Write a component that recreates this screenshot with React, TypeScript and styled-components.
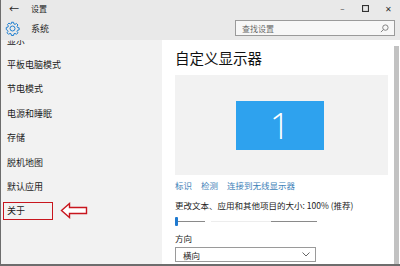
import styled, { createGlobalStyle } from 'styled-components';

const GlobalStyle = createGlobalStyle`
  html, body { margin: 0; padding: 0; background: #fff; }
  body { font-family: "Noto Sans CJK SC", "Noto Sans", sans-serif; }
`;

const Window = styled.div`
  width: 400px;
  height: 266px;
  box-sizing: border-box;
  border-left: 1px solid #6d6d6d;
  border-bottom: 2px solid #6d6d6d;
  background: #e9e9e9;
  display: flex;
  flex-direction: column;
  overflow: hidden;
  color: #1e1e1e;
`;

const TitleBar = styled.div`
  height: 16px;
  display: flex;
  align-items: center;
  padding: 0 0 0 8px;
  font-size: 8px;
`;

const Back = styled.span`
  font-size: 10px;
  width: 22px;
`;

const TitleText = styled.span`
  flex: 1;
`;

const WinButton = styled.span`
  width: 23px;
  display: flex;
  justify-content: center;
  align-items: center;
  color: #333;
`;

const Header = styled.div`
  height: 24px;
  display: flex;
  align-items: center;
  padding: 0 5px 0 4px;
`;

const HeaderTitle = styled.span`
  font-size: 9px;
  margin-left: 11px;
  flex: 1;
`;

const Search = styled.div`
  width: 147px;
  height: 14px;
  border: 1px solid #9a9a9a;
  background: #f7f7f7;
  display: flex;
  align-items: center;
  justify-content: space-between;
  padding: 0 5px 0 6px;
  font-size: 8px;
  color: #6a6a6a;
`;

const Body = styled.div`
  flex: 1;
  display: flex;
  min-height: 0;
`;

const Sidebar = styled.div`
  width: 161px;
  background: #f2f2f2;
  overflow: hidden;
  position: relative;
`;

const NavList = styled.div`
  margin-top: -12px;
  display: flex;
  flex-direction: column;
`;

const NavItem = styled.div<{ $marked?: boolean }>`
  height: 24.4px;
  display: flex;
  align-items: center;
  padding-left: 6px;
  font-size: 9px;
  color: #1a1a1a;
  position: relative;
  ${(p) =>
    p.$marked &&
    `
    &::after {
      content: '';
      position: absolute;
      left: 2px;
      top: 3px;
      width: 48px;
      height: 16px;
      border: 1.5px solid #c8161e;
    }
  `}
`;

const Arrow = styled.svg`
  position: absolute;
  left: 59px;
  top: 162px;
`;

const Content = styled.div`
  flex: 1;
  background: #fff;
  padding: 8px 0 0 13px;
  display: flex;
  flex-direction: column;
  overflow: hidden;
`;

const Heading = styled.div`
  font-size: 14.5px;
  line-height: 20px;
  color: #111;
`;

const Preview = styled.div`
  margin-top: 7px;
  width: 213px;
  height: 100px;
  background: #f2f2f2;
  display: flex;
  align-items: center;
  justify-content: center;
`;

const Monitor = styled.div`
  width: 88px;
  height: 49px;
  background: #2ea2ee;
  color: #fff;
  font-family: "Open Sans", "Liberation Sans", sans-serif;
  font-weight: 300;
  font-size: 36px;
  display: flex;
  align-items: center;
  justify-content: center;
  margin-left: -3px;
`;

const Links = styled.div`
  display: flex;
  gap: 9px;
  margin-top: 4px;
  font-size: 8.5px;
  color: #3d7fb8;
`;

const Label = styled.div<{ $top: number }>`
  font-size: 8.5px;
  margin-top: ${(p) => p.$top}px;
  color: #222;
`;

const Slider = styled.div`
  margin-top: 5px;
  display: flex;
  align-items: center;
  height: 10px;
`;

const Thumb = styled.div`
  width: 3px;
  height: 9px;
  border-radius: 1px;
  background: #1f7ad0;
`;

const Track = styled.div<{ $w: number; $faded?: boolean }>`
  width: ${(p) => p.$w}px;
  height: 1px;
  background: ${(p) => (p.$faded ? '#ededed' : '#8a8a8a')};
  margin-left: ${(p) => (p.$faded ? 6 : 0)}px;
`;

const Select = styled.div`
  margin-top: 3px;
  width: 141px;
  height: 15px;
  box-sizing: border-box;
  border: 1px solid #9a9a9a;
  display: flex;
  align-items: center;
  justify-content: space-between;
  padding: 0 5px 0 7px;
  font-size: 8.5px;
`;

const Scrollbar = styled.div`
  width: 7px;
  background: #fff;
  display: flex;
  flex-direction: column;
  align-items: center;
`;

const ScrollThumb = styled.div`
  margin-top: 6px;
  width: 5px;
  flex: 1;
  background: #c2c2c2;
`;

const Gear = () => (
  <svg width="15" height="15" viewBox="0 0 24 24" fill="none" stroke="#1f7fd0" strokeWidth="1.6">
    <path d="M10.3 2h3.4l.5 2.6 1.9.8 2.2-1.5 2.4 2.4-1.5 2.2.8 1.9 2.6.5v3.4l-2.6.5-.8 1.9 1.5 2.2-2.4 2.4-2.2-1.5-1.9.8-.5 2.6h-3.4l-.5-2.6-1.9-.8-2.2 1.5-2.4-2.4 1.5-2.2-.8-1.9L2 13.7v-3.4l2.6-.5.8-1.9-1.5-2.2 2.4-2.4 2.2 1.5 1.9-.8z" />
    <circle cx="12" cy="12" r="4" />
  </svg>
);

const SearchIcon = () => (
  <svg width="9" height="9" viewBox="0 0 10 10" fill="none" stroke="#777" strokeWidth="1">
    <circle cx="6" cy="4" r="3" />
    <path d="M4 6L1 9" />
  </svg>
);

export default function App() {
  const nav = ['显示', '平板电脑模式', '节电模式', '电源和睡眠', '存储', '脱机地图', '默认应用', '关于'];
  return (
    <>
      <GlobalStyle />
      <Window>
        <TitleBar>
          <Back>←</Back>
          <TitleText>设置</TitleText>
          <WinButton>–</WinButton>
          <WinButton>
            <svg width="7" height="7"><rect x="0.5" y="0.5" width="6" height="6" fill="none" stroke="#333" strokeWidth="1.2" /></svg>
          </WinButton>
          <WinButton>✕</WinButton>
        </TitleBar>
        <Header>
          <Gear />
          <HeaderTitle>系统</HeaderTitle>
          <Search>
            <span>查找设置</span>
            <SearchIcon />
          </Search>
        </Header>
        <Body>
          <Sidebar>
            <NavList>
              {nav.map((n) => (
                <NavItem key={n} $marked={n === '关于'}>{n}</NavItem>
              ))}
            </NavList>
            <Arrow width="28" height="17" viewBox="0 0 28 17">
              <path d="M1.5 8.5L9.5 1.5v4h17v6h-17v4z" fill="#fff" stroke="#c8161e" strokeWidth="1.4" strokeLinejoin="miter" />
            </Arrow>
          </Sidebar>
          <Content>
            <Heading>自定义显示器</Heading>
            <Preview>
              <Monitor>1</Monitor>
            </Preview>
            <Links>
              <span>标识</span>
              <span>检测</span>
              <span>连接到无线显示器</span>
            </Links>
            <Label $top={8}>更改文本、应用和其他项目的大小: 100% (推荐)</Label>
            <Slider>
              <Thumb />
              <Track $w={27} />
              <Track $w={60} $faded />
              <Track $w={46} />
            </Slider>
            <Label $top={6}>方向</Label>
            <Select>
              <span>横向</span>
              <svg width="8" height="5" viewBox="0 0 8 5"><path d="M0.5 0.5L4 4 7.5 0.5" fill="none" stroke="#555" strokeWidth="0.9" /></svg>
            </Select>
          </Content>
          <Scrollbar>
            <ScrollThumb />
          </Scrollbar>
        </Body>
      </Window>
    </>
  );
}
